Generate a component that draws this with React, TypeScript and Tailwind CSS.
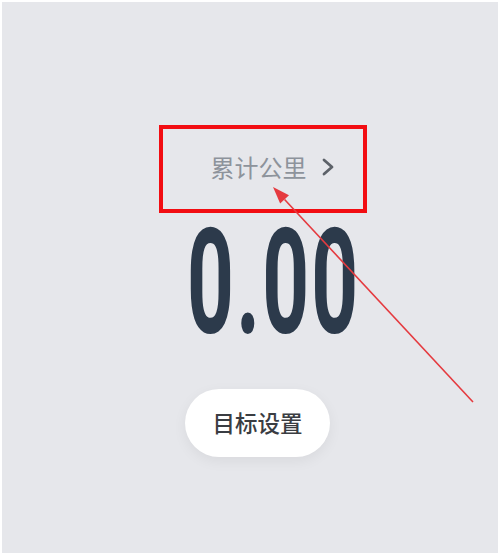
import React from 'react';

function Arrow() {
  // annotation arrow drawn over the screenshot
  const x1 = 473, y1 = 402, x2 = 273, y2 = 187;
  const ang = Math.atan2(y2 - y1, x2 - x1);
  const len = 17, half = 6;
  const bx = x2 - len * Math.cos(ang), by = y2 - len * Math.sin(ang);
  const px = -Math.sin(ang) * half, py = Math.cos(ang) * half;
  return (
    <svg className="absolute inset-0 pointer-events-none" width="500" height="555" viewBox="0 0 500 555">
      <line x1={x1} y1={y1} x2={bx} y2={by} stroke="#e53a3f" strokeWidth="1.6" />
      <polygon points={`${x2},${y2} ${bx + px},${by + py} ${bx - px},${by - py}`} fill="#e53a3f" />
    </svg>
  );
}

export default function App() {
  return (
    <div className="relative w-[500px] h-[555px] bg-white px-[2px] pt-[2px] pb-[2px]">
      <div className="h-full bg-[#e6e7eb] flex flex-col items-center pt-[123px]">
        <div className="ml-[26px] w-[208px] h-[88px] border-4 border-[#f20d12] flex items-center justify-center pl-[19px] pb-[4px]">
          <span className="text-[24px] leading-none text-[#8d939b]" style={{ fontFamily: '"Noto Sans CJK SC", sans-serif' }}>累计公里</span>
          <svg className="ml-[14px]" width="14" height="18" viewBox="0 0 14 18">
            <path d="M3 2 L11 9 L3 16" fill="none" stroke="#5d6269" strokeWidth="2.8" strokeLinecap="round" strokeLinejoin="round" />
          </svg>
        </div>
        <div className="ml-[48px] mt-[11px] h-[120px] flex items-center justify-center">
          <span
            className="inline-block scale-x-[0.56] text-[146px] leading-none font-bold text-[#2c3a4b] tracking-[4px]"
            style={{ fontFamily: 'Roboto, sans-serif' }}
          >
            0.00
          </span>
        </div>
        <button
          className="ml-[15px] mt-[45px] w-[145px] h-[68px] rounded-full bg-white shadow-[0_4px_14px_rgba(0,0,0,0.06)] text-[22.5px] font-medium text-[#3a3d42]"
          style={{ fontFamily: '"Noto Sans CJK SC", sans-serif' }}
        >
          目标设置
        </button>
      </div>
      <Arrow />
    </div>
  );
}
